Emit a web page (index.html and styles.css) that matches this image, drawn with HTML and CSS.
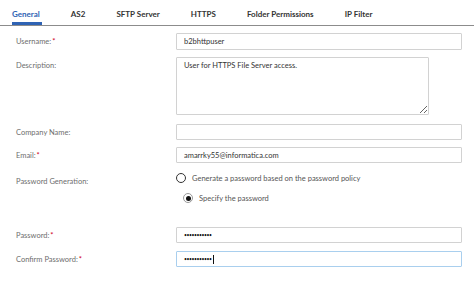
FILE: index.html
```html
<!DOCTYPE html>
<html lang="en">
<head>
<meta charset="UTF-8">
<title>User Properties</title>
<meta name="viewport" content="width=device-width, initial-scale=1.0">
<link rel="stylesheet" href="styles.css">
</head>
<body>

<div class="tabs">
  <div class="tab active">General</div>
  <div class="tab">AS2</div>
  <div class="tab">SFTP Server</div>
  <div class="tab">HTTPS</div>
  <div class="tab">Folder Permissions</div>
  <div class="tab">IP Filter</div>
</div>

<div class="form">
  <div class="row row-user">
    <label class="label">Username:<span class="req">*</span></label>
    <input class="field" type="text" value="b2bhttpuser">
  </div>

  <div class="row row-desc">
    <label class="label label-top">Description:</label>
    <textarea class="area">User for HTTPS File Server access.</textarea>
  </div>

  <div class="row row-company">
    <label class="label">Company Name:</label>
    <input class="field" type="text" value="">
  </div>

  <div class="row row-email">
    <label class="label">Email:<span class="req">*</span></label>
    <input class="field" type="text" value="amarrky55@informatica.com">
  </div>

  <div class="row row-gen">
    <label class="label label-top">Password Generation:</label>
    <div class="radios">
      <div class="radio">
        <span class="dot"></span>
        <span>Generate a password based on the password policy</span>
      </div>
      <div class="radio radio-sub checked">
        <span class="dot"></span>
        <span>Specify the password</span>
      </div>
    </div>
  </div>

  <div class="row row-pass">
    <label class="label">Password:<span class="req">*</span></label>
    <div class="field pass">•••••••••••</div>
  </div>

  <div class="row row-confirm">
    <label class="label">Confirm Password:<span class="req">*</span></label>
    <div class="field pass focus">•••••••••••<span class="caret"></span></div>
  </div>
</div>

</body>
</html>
```

FILE: styles.css
```css
body {
  margin: 0;
  background-color: #fff;
  font-family: Lato, "Open Sans", Arial, sans-serif;
  font-size: 8px;
  color: #333;
}

/* tab bar */
.tabs {
  display: flex;
  height: 25px;
  border-bottom: 1px solid #8c8c8c;
  padding-left: 12px;
  box-sizing: content-box;
}
.tab {
  display: flex;
  align-items: center;
  height: 25px;
  box-sizing: border-box;
  padding-top: 2px;
  margin-right: 31px;
  color: #333;
  font-size: 8px;
  font-weight: 700;
}
.tab.active {
  color: #2f63b4;
  border-bottom: 3px solid #2f63b4;
  padding-top: 5px;
  padding-right: 2px;
  margin-right: 29px;
}

/* form */
.form {
  padding: 7px 0 0 16px;
}
.row {
  display: flex;
  align-items: center;
}
.label {
  width: 160px;
  flex-shrink: 0;
  color: #6e6e6e;
  font-size: 7.5px;
}
.label-top {
  align-self: flex-start;
  padding-top: 4px;
}
.req {
  color: #d0021b;
  margin-left: 1px;
}
.field {
  width: 286px;
  height: 16px;
  box-sizing: border-box;
  border: 1px solid #d2d2d2;
  border-radius: 1px;
  padding: 0 7px;
  font-family: inherit;
  font-size: 7.5px;
  color: #333;
  outline: none;
  display: flex;
  align-items: center;
}
.area {
  width: 253px;
  height: 58px;
  box-sizing: border-box;
  border: 1px solid #d2d2d2;
  border-radius: 1px;
  padding: 3px 7px;
  font-family: inherit;
  font-size: 7.5px;
  color: #333;
  margin: 0;
  outline: none;
}

.row-user .field { height: 17px; }
.row-desc { margin-top: 7px; }
.row-company { margin-top: 9px; }
.row-email { margin-top: 7px; }
.row-gen { margin-top: 10px; }
.row-pass { margin-top: 24px; }
.row-confirm { margin-top: 8px; }

/* radios */
.radios {
  display: flex;
  flex-direction: column;
  gap: 10px;
}
.radio {
  display: flex;
  align-items: center;
  gap: 6px;
  color: #555;
  font-size: 7.5px;
}
.radio-sub {
  margin-left: 7px;
}
.dot {
  width: 10px;
  height: 10px;
  box-sizing: border-box;
  border: 1px solid #333;
  border-radius: 50%;
  background: #fff;
  position: relative;
}
.radio.checked .dot {
  border-color: #9a9a9a;
}
.radio.checked .dot::after {
  content: "";
  position: absolute;
  left: 1.5px;
  top: 1.5px;
  width: 5px;
  height: 5px;
  border-radius: 50%;
  background: #111;
}

/* password fields */
.pass {
  font-size: 5px;
  letter-spacing: -0.4px;
  color: #111;
}
.focus {
  border-color: #a9cfee;
}
.caret {
  display: inline-block;
  width: 1px;
  height: 9px;
  background: #111;
  margin-left: 1px;
}
```
